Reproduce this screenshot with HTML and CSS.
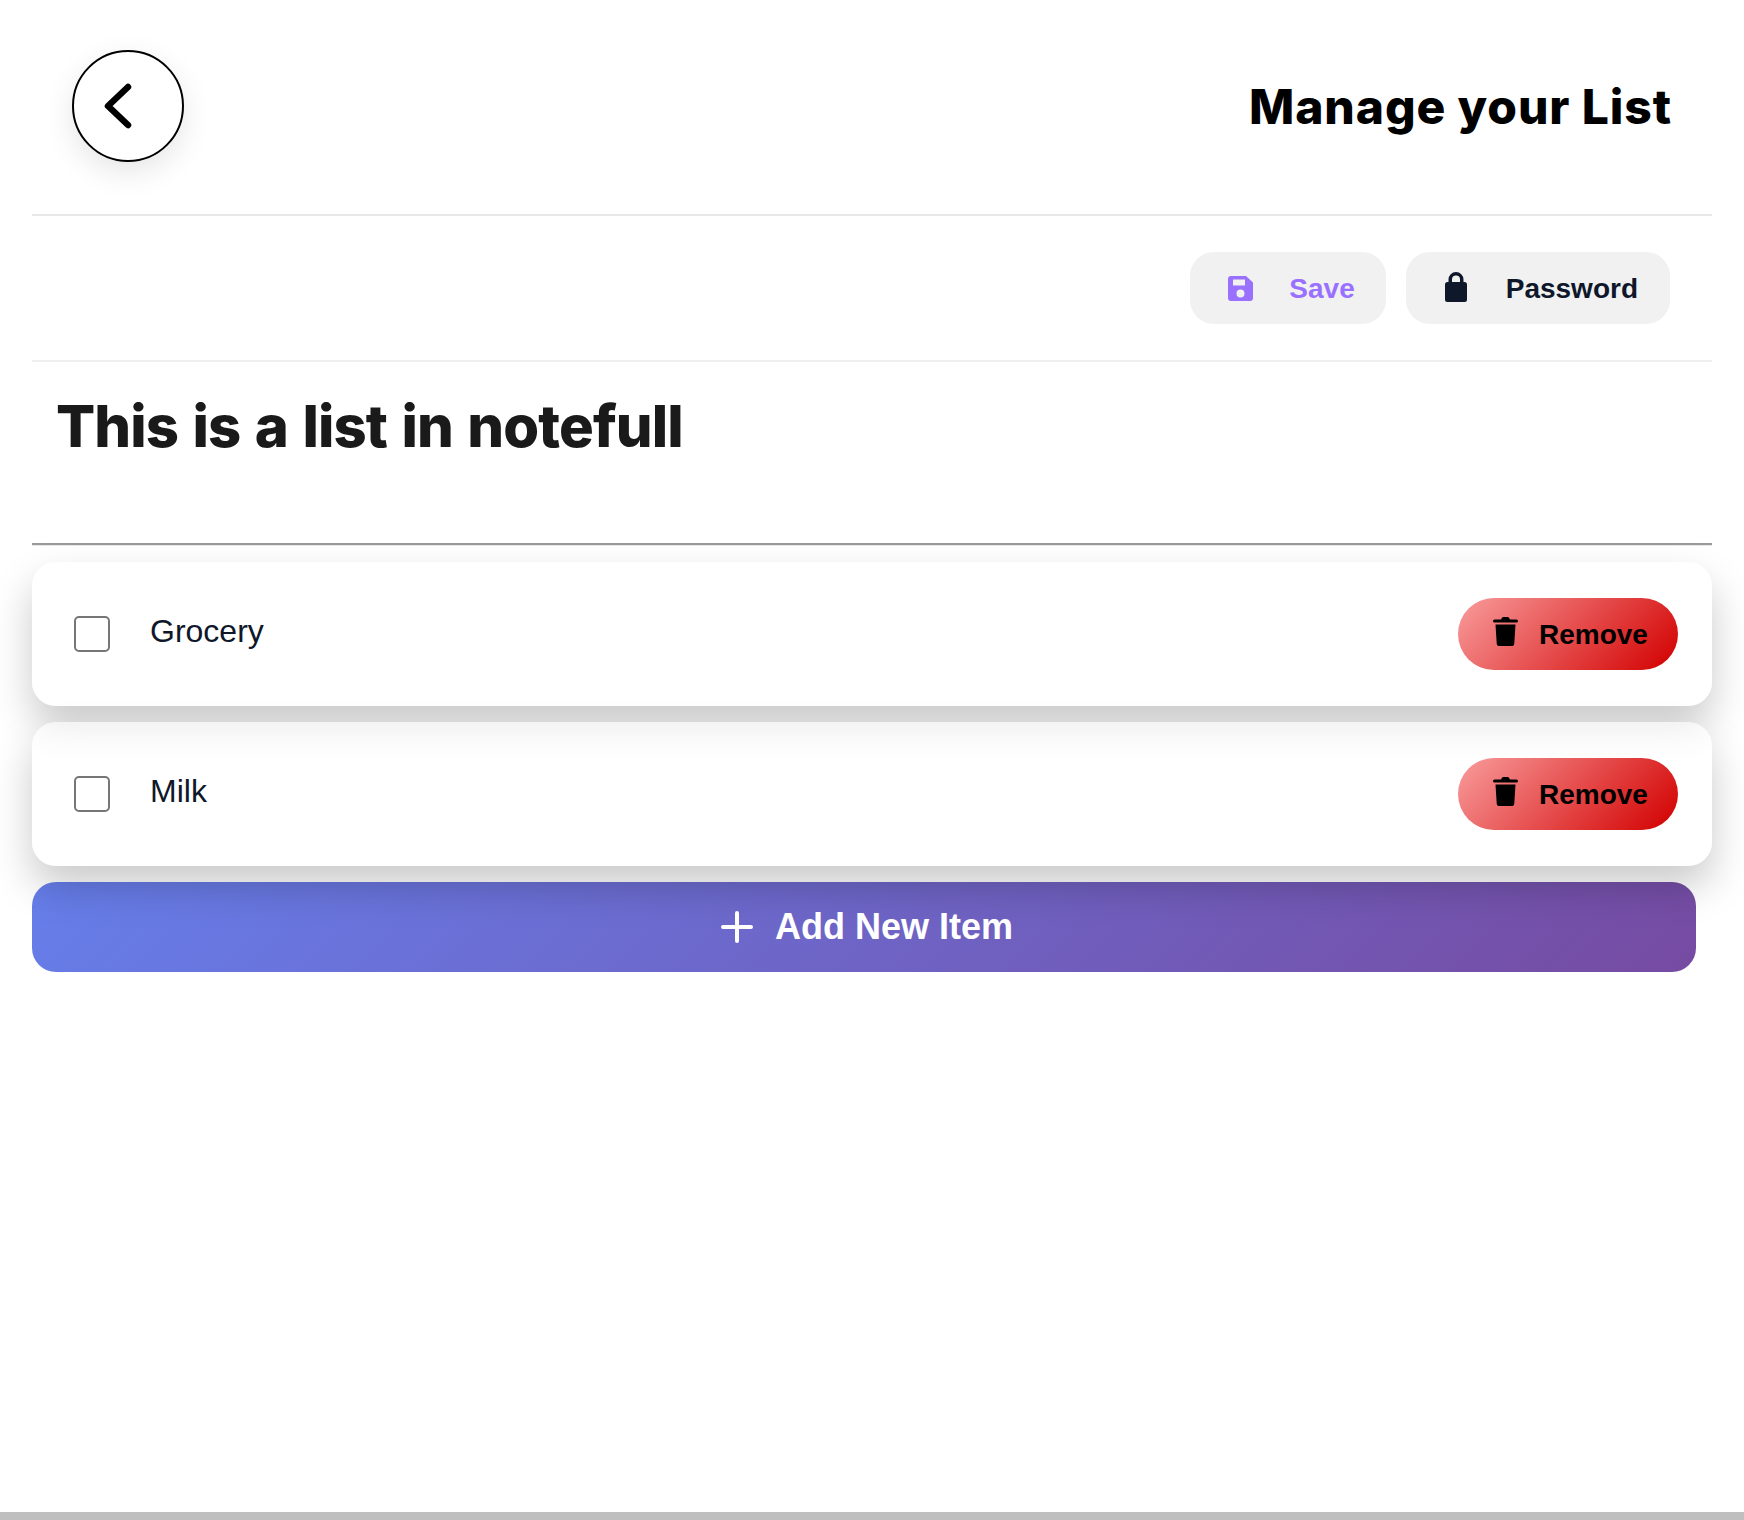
FILE: index.html
```html
<!DOCTYPE html>
<html lang="en">
<head>
<meta charset="utf-8">
<title>Manage your List</title>
<link rel="stylesheet" href="styles.css">
</head>
<body>
<main class="page">
  <header class="header">
    <button class="back" aria-label="Back">
      <svg width="40" height="56" viewBox="0 0 40 56"><path d="M29 9 L9 28 L29 47" fill="none" stroke="#000" stroke-width="6.500" stroke-linecap="round" stroke-linejoin="round"/></svg>
    </button>
    <h2 class="page-title">Manage your List</h2>
  </header>
  <div class="toolbar">
    <button class="tool tool-save">
      <span class="tool-icon"><svg width="25" height="25" viewBox="0 0 25 25"><path fill="#9a70ff" fill-rule="evenodd" d="M3 0H18L25 6.500V22A3 3 0 0 1 22 25H3A3 3 0 0 1 0 22V3A3 3 0 0 1 3 0ZM5 3.500V9.500H17V3.500ZM12.500 13.500A4 4 0 1 0 12.500 21.500A4 4 0 1 0 12.500 13.500Z"/></svg></span>
      <span class="tool-label">Save</span>
    </button>
    <button class="tool tool-password">
      <span class="tool-icon"><svg class="lock" width="22" height="30" viewBox="0 0 22 30"><path fill="#0f172a" fill-rule="evenodd" d="M3.500 10V7.500A7.500 7.500 0 0 1 18.500 7.500V10H19.500A2.500 2.500 0 0 1 22 12.500V27.500A2.500 2.500 0 0 1 19.500 30H2.500A2.500 2.500 0 0 1 0 27.500V12.500A2.500 2.500 0 0 1 2.500 10ZM7 10H15V7.500A4 4 0 0 0 7 7.500Z"/></svg></span>
      <span class="tool-label">Password</span>
    </button>
  </div>
  <div class="title-block">
    <h1 class="list-title">This is a list in notefull</h1>
  </div>
  <ul class="items">
    <li class="item">
      <input class="check" type="checkbox" aria-label="Grocery">
      <span class="item-name">Grocery</span>
      <button class="remove">
        <svg width="25" height="29" viewBox="0 0 25 29"><path fill="#000" d="M8 2.500 9 .8C9.200.3 9.700 0 10.300 0H14.700C15.300 0 15.800.3 16 .8L17 2.500H23.500A1.500 1.500 0 0 1 23.500 5.500H1.500A1.500 1.500 0 0 1 1.500 2.500ZM2.500 7.500H22.500L21.300 26.200A2.800 2.800 0 0 1 18.500 29H6.500A2.800 2.800 0 0 1 3.700 26.200Z"/></svg>
        <span class="remove-label">Remove</span>
      </button>
    </li>
    <li class="item">
      <input class="check" type="checkbox" aria-label="Milk">
      <span class="item-name">Milk</span>
      <button class="remove">
        <svg width="25" height="29" viewBox="0 0 25 29"><path fill="#000" d="M8 2.500 9 .8C9.200.3 9.700 0 10.300 0H14.700C15.300 0 15.800.3 16 .8L17 2.500H23.500A1.500 1.500 0 0 1 23.500 5.500H1.500A1.500 1.500 0 0 1 1.500 2.500ZM2.500 7.500H22.500L21.300 26.200A2.800 2.800 0 0 1 18.500 29H6.500A2.800 2.800 0 0 1 3.700 26.200Z"/></svg>
        <span class="remove-label">Remove</span>
      </button>
    </li>
  </ul>
  <button class="add">
    <svg width="32" height="32" viewBox="0 0 32 32"><path d="M16 2V30M2 16H30" fill="none" stroke="#fff" stroke-width="4" stroke-linecap="round"/></svg>
    <span>Add New Item</span>
  </button>
</main>
<div class="bottom-strip"></div>
</body>
</html>
```
FILE: styles.css
```css
* { box-sizing: border-box; }
html, body { margin: 0; padding: 0; }
body {
  background: #fff;
  font-family: "Liberation Sans", Arial, sans-serif;
  color: #0f172a;
  min-height: 1520px;
  display: flex;
  flex-direction: column;
  overflow: hidden;
}
button { font-family: inherit; border: 0; cursor: pointer; }
.page {
  flex: 1;
  padding: 0 32px;
}
.header {
  height: 216px;
  border-bottom: 2px solid #e8e8e8;
  display: flex;
  align-items: flex-start;
  justify-content: space-between;
  padding: 50px 40px 0;
}
.back {
  width: 112px;
  height: 112px;
  border-radius: 50%;
  border: 2px solid #000;
  background: #fff;
  box-shadow: 0 10px 30px rgba(0, 0, 0, 0.1);
  display: flex;
  align-items: center;
  justify-content: center;
  padding: 0 19px 0 0;
}
.page-title {
  margin: 0;
  font-family: Inter, "Liberation Sans", sans-serif;
  font-weight: 800;
  font-size: 48px;
  line-height: 114px;
  color: #000;
  letter-spacing: 0.9px;
}
.toolbar {
  height: 146px;
  border-bottom: 2px solid #f0f0f0;
  display: flex;
  justify-content: flex-end;
  align-items: flex-start;
  gap: 20px;
  padding: 36px 42px 0 0;
}
.tool {
  height: 72px;
  border-radius: 24px;
  background: #f1f1f1;
  display: flex;
  align-items: center;
  gap: 32px;
  padding: 0 32px;
  font-size: 28px;
  font-weight: 700;
}
.tool-icon {
  width: 36px;
  display: flex;
  justify-content: center;
}
.tool-label { padding-top: 2px; }
.lock { margin-bottom: 2px; }
.tool-save { color: #9a70ff; padding-right: 31px; gap: 31px; }
.tool-password { color: #0f172a; }
.title-block {
  height: 183px;
  border-bottom: 2px solid #999;
  box-shadow: 0 1px 0 #e8e8e8;
  padding: 28px 0 0 24px;
}
.list-title {
  margin: 0;
  font-family: Inter, "Liberation Sans", sans-serif;
  font-weight: 800;
  font-size: 58px;
  line-height: 72px;
  color: #1a1a1a;
  letter-spacing: -0.9px;
  word-spacing: 2.6px;
}
.items {
  list-style: none;
  margin: 17px 0 0;
  padding: 0;
  display: flex;
  flex-direction: column;
  gap: 16px;
}
.item {
  height: 144px;
  border-radius: 24px;
  background: rgba(255, 255, 255, 0.6);
  box-shadow: 0 20px 40px rgba(0, 0, 0, 0.21);
  display: flex;
  align-items: center;
  padding: 0 34px 0 42px;
}
.check {
  appearance: none;
  width: 36px;
  height: 36px;
  margin: 0 40px 0 0;
  border: 2px solid #767676;
  border-radius: 5px;
  background: #fff;
  flex: none;
}
.item-name {
  flex: 1;
  font-size: 32px;
  line-height: 40px;
  margin-bottom: 6px;
  color: #0f172a;
}
.remove {
  width: 220px;
  height: 72px;
  border-radius: 36px;
  background: linear-gradient(135deg, #f99c9c 0%, #d40606 95%);
  color: #000;
  font-size: 28px;
  font-weight: 700;
  display: flex;
  align-items: center;
  justify-content: flex-start;
  gap: 21px;
  padding: 0 0 0 35px;
}
.remove svg { margin-bottom: 6px; }
.remove-label { padding-top: 2px; }
.add {
  margin-top: 16px;
  width: 1664px;
  height: 90px;
  border-radius: 24px;
  background: linear-gradient(135deg, #667eea 0%, #764ba2 100%);
  color: #fff;
  font-size: 36px;
  font-weight: 700;
  display: flex;
  align-items: center;
  justify-content: center;
  gap: 22px;
  padding: 0 0 0 6px;
}
.add span { margin-bottom: 1px; }
.bottom-strip {
  height: 8px;
  background: #bfbfbf;
}
```
